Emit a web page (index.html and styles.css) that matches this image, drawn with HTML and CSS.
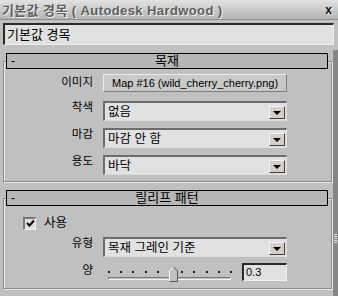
FILE: index.html
```html
<!DOCTYPE html>
<html lang="ko">
<head>
    <meta charset="UTF-8">
    <title>기본값 경목</title>
    <link rel="stylesheet" href="styles.css">
</head>
<body>
    <div class="titlebar">
        <span class="title">기본값 경목 ( Autodesk Hardwood )</span>
        <span class="close">x</span>
    </div>
    <div class="name-row">
        <div class="name-field">기본값 경목</div>
    </div>
    <div class="main">
        <div class="panels">
            <div class="rollout">
                <div class="rollout-head"><span class="toggle">-</span><span class="rollout-title">목재</span></div>
                <div class="rollout-body body-wood">
                    <div class="form">
                        <span class="lbl lbl-btn">이미지</span>
                        <div class="map-btn">Map #16 (wild_cherry_cherry.png)</div>
                        <span class="lbl">착색</span>
                        <div class="combo"><span class="combo-text">없음</span><span class="arrow"></span></div>
                        <span class="lbl">마감</span>
                        <div class="combo"><span class="combo-text">마감 안 함</span><span class="arrow"></span></div>
                        <span class="lbl">용도</span>
                        <div class="combo"><span class="combo-text">바닥</span><span class="arrow"></span></div>
                    </div>
                </div>
            </div>
            <div class="rollout">
                <div class="rollout-head"><span class="toggle">-</span><span class="rollout-title">릴리프 패턴</span></div>
                <div class="rollout-body body-relief">
                    <div class="check-row">
                        <span class="checkbox">
                            <svg width="9" height="9" viewBox="0 0 9 9"><path d="M1 4 L3.5 6.5 L8 1.5" fill="none" stroke="#000" stroke-width="2"/></svg>
                        </span>
                        <span class="check-label">사용</span>
                    </div>
                    <div class="form form-relief">
                        <span class="lbl">유형</span>
                        <div class="combo"><span class="combo-text">목재 그레인 기준</span><span class="arrow"></span></div>
                        <span class="lbl lbl-amount">양</span>
                        <div class="amount">
                            <div class="slider">
                                <div class="ticks">
                                    <i></i><i></i><i></i><i></i><i></i><i></i><i></i><i></i><i></i><i></i><i></i>
                                </div>
                                <div class="track"></div>
                                <svg class="thumb" style="left: 66px" width="9" height="16" viewBox="0 0 9 16">
                                    <path d="M0.5 15.5 V5 L4.5 0.8 L8.5 5 V15.5 Z" fill="#c0c0c0"/>
                                    <path d="M0.5 15.5 V5 L4.5 0.8" fill="none" stroke="#fff"/>
                                    <path d="M4.5 0.8 L8.5 5 V15.5 H0.5" fill="none" stroke="#555"/>
                                </svg>
                            </div>
                            <div class="spinner">0.3</div>
                        </div>
                    </div>
                </div>
            </div>
        </div>
        <div class="scroll"><div class="grip"></div></div>
    </div>
</body>
</html>
```
FILE: styles.css
```css
html, body {
    margin: 0;
    width: 338px;
    height: 296px;
    overflow: hidden;
}
body {
    background: #c0c0c0;
    font-family: "Liberation Sans", "Noto Sans CJK KR", sans-serif;
    font-size: 12px;
    color: #000;
    display: flex;
    flex-direction: column;
}
.titlebar {
    height: 19px;
    border-bottom: 1px solid #8c8c8c;
    background: linear-gradient(#e2e2e2, #b4b4b4);
    display: flex;
    align-items: center;
    justify-content: space-between;
    padding: 0 6px 0 2px;
}
.title {
    font-weight: bold;
    font-size: 13px;
    letter-spacing: 0.4px;
    color: #5e5e5e;
    text-shadow: 1px 1px 0 #f4f4f4;
}
.close {
    font-weight: bold;
    font-size: 12px;
    color: #111;
    text-shadow: 1px 1px 0 #eee;
}
.name-row {
    padding: 3px 4px 5px 3px;
}
.name-field {
    height: 19px;
    border-top: 2px solid #2a2a2a;
    border-left: 2px solid #2a2a2a;
    border-right: 1px solid #f0f0f0;
    border-bottom: 1px solid #f0f0f0;
    background: #e1e1e1;
    padding-left: 2px;
    font-size: 13px;
    line-height: 19px;
}
.main {
    flex: 1;
    display: flex;
}
.panels {
    flex: 1;
    padding: 3px 1px 0 3px;
}
.scroll {
    width: 5px;
    background: #868686;
}
.grip {
    width: 3px;
    height: 9px;
    margin: 184px 0 0 1px;
    background: repeating-linear-gradient(#e6e6e6 0 1px, transparent 1px 2px);
}
.rollout {
    margin-bottom: 8px;
}
.rollout-head {
    position: relative;
    z-index: 1;
    height: 14px;
    margin: 0 4px 0 3px;
    border: 1px solid #000;
    background: #b6b6b6;
    display: grid;
    grid-template-columns: 1fr auto 1fr;
    align-items: center;
    line-height: 14px;
}
.rollout-title {
    font-size: 13px;
}
.toggle {
    padding-left: 4px;
}
.rollout-body {
    margin-top: -8px;
    border: 1px solid #8a8a8a;
    box-shadow: 1px 1px 0 #ececec, inset 1px 1px 0 #ececec;
}
.body-wood {
    padding: 12px 0 6px;
}
.body-relief {
    padding: 17px 0 6px;
}
.form {
    display: grid;
    grid-template-columns: 89px 184px;
    grid-auto-rows: 20px;
    column-gap: 10px;
    row-gap: 7px;
}
.form-relief {
    margin-top: 7px;
    row-gap: 6px;
    grid-template-rows: 20px 19px;
}
.lbl {
    font-size: 11.5px;
    line-height: 14px;
    text-align: right;
    align-self: start;
    margin-top: -1px;
}
.lbl-btn {
    margin-top: 1px;
}
.lbl-amount {
    margin-top: 0;
}
.map-btn {
    height: 16px;
    border: 1px solid;
    border-color: #ececec #7c7c7c #7c7c7c #ececec;
    background: #c9c9c9;
    font-size: 11px;
    line-height: 16px;
    padding-left: 8px;
    white-space: nowrap;
    overflow: hidden;
}
.combo {
    height: 17px;
    border-top: 2px solid #6c6c6c;
    border-left: 2px solid #6c6c6c;
    border-right: 1px solid #dcdcdc;
    border-bottom: 1px solid #dcdcdc;
    background: #e1e1e1;
    display: flex;
    align-items: center;
    justify-content: space-between;
}
.combo-text {
    padding-left: 3px;
    font-size: 12.5px;
    line-height: 16px;
}
.arrow {
    align-self: flex-end;
    width: 14px;
    height: 11px;
    margin: 0 1px 1px 0;
    border: 1px solid;
    border-color: #f4f4f4 #3c3c3c #3c3c3c #f4f4f4;
    background: #d4d0c8;
    display: flex;
    align-items: center;
    justify-content: center;
}
.arrow::after {
    content: "";
    border-left: 4px solid transparent;
    border-right: 4px solid transparent;
    border-top: 4px solid #000;
    margin-top: 1px;
}
.check-row {
    height: 14px;
    display: flex;
    align-items: center;
    padding-left: 19px;
    gap: 8px;
}
.checkbox {
    width: 10px;
    height: 10px;
    border-top: 2px solid #7a7a7a;
    border-left: 2px solid #7a7a7a;
    border-right: 1px solid #f2f2f2;
    border-bottom: 1px solid #f2f2f2;
    background: #dedede;
    display: flex;
    align-items: center;
    justify-content: center;
}
.check-label {
    font-size: 12.5px;
    line-height: 14px;
}
.amount {
    display: flex;
    justify-content: space-between;
}
.slider {
    position: relative;
    width: 136px;
}
.ticks {
    display: flex;
    justify-content: space-between;
    margin: 8px 0 0 5px;
    width: 124px;
}
.ticks i {
    width: 2px;
    height: 2px;
    background: #202020;
}
.track {
    margin: 4px 0 0 5px;
    width: 121px;
    height: 1px;
    border-top: 1px solid #7a7a7a;
    border-left: 1px solid #7a7a7a;
    border-bottom: 1px solid #f2f2f2;
    border-right: 1px solid #f2f2f2;
}
.thumb {
    position: absolute;
    top: 3px;
}
.spinner {
    width: 40px;
    height: 15px;
    border-top: 2px solid #2a2a2a;
    border-left: 2px solid #2a2a2a;
    border-right: 1px solid #f0f0f0;
    border-bottom: 1px solid #f0f0f0;
    background: #e1e1e1;
    font-size: 11px;
    line-height: 15px;
    padding-left: 2px;
}
```
